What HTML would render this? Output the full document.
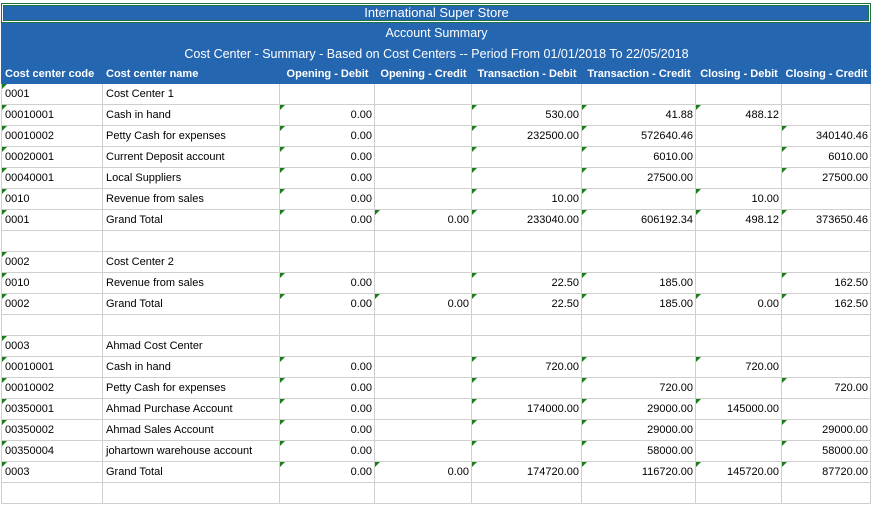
<!DOCTYPE html>
<html><head><meta charset="utf-8"><style>
body{margin:0;width:875px;height:505px;overflow:hidden;background:#fff;font-family:"Liberation Sans",sans-serif;}
.wrap{position:absolute;left:1px;top:3px;}
table{border-collapse:collapse;table-layout:fixed;}
td{border:1px solid #cfcfcf;height:20px;padding:0 2px 0 3px;font-size:11px;line-height:20px;white-space:nowrap;overflow:hidden;color:#000;position:relative;vertical-align:bottom;}
td.r{text-align:right;}
td.m::before{content:"";position:absolute;left:0;top:0;border-top:5px solid #1a7d1a;border-right:5px solid transparent;}
tr.b td{background:#2566b1;color:#fff;border-color:#2566b1;}
tr.t td{font-size:13px;text-align:center;height:18px;line-height:18px;}
tr.h td{font-weight:bold;font-size:11px;height:18px;line-height:18px;text-align:center;}
tr.h td.l{text-align:left;}
tr.s td{font-size:12.5px;text-align:center;}
</style></head><body>
<div class="wrap"><table>
<colgroup><col style="width:101px"><col style="width:177px"><col style="width:95px"><col style="width:97px"><col style="width:110px"><col style="width:114px"><col style="width:86px"><col style="width:89px"></colgroup>
<tr class="b t"><td colspan="8" style="box-shadow:inset 0 0 0 1px #fff,inset 0 0 0 2px #217346;border:1px solid #217346">International Super Store</td></tr>
<tr class="b s"><td colspan="8">Account Summary</td></tr>
<tr class="b s"><td colspan="8">Cost Center - Summary - Based on Cost Centers -- Period From 01/01/2018 To 22/05/2018</td></tr>
<tr class="b h"><td class="l">Cost center code</td><td class="l">Cost center name</td><td>Opening - Debit</td><td>Opening - Credit</td><td>Transaction - Debit</td><td>Transaction - Credit</td><td>Closing - Debit</td><td>Closing - Credit</td></tr>
<tr><td class="m">0001</td><td>Cost Center 1</td><td></td><td></td><td></td><td></td><td></td><td></td></tr>
<tr><td class="m">00010001</td><td>Cash in hand</td><td class="r m">0.00</td><td></td><td class="r m">530.00</td><td class="r m">41.88</td><td class="r m">488.12</td><td></td></tr>
<tr><td class="m">00010002</td><td>Petty Cash for expenses</td><td class="r m">0.00</td><td></td><td class="r m">232500.00</td><td class="r m">572640.46</td><td></td><td class="r m">340140.46</td></tr>
<tr><td class="m">00020001</td><td>Current Deposit account</td><td class="r m">0.00</td><td></td><td class="m"></td><td class="r m">6010.00</td><td></td><td class="r m">6010.00</td></tr>
<tr><td class="m">00040001</td><td>Local Suppliers</td><td class="r m">0.00</td><td></td><td class="m"></td><td class="r m">27500.00</td><td></td><td class="r m">27500.00</td></tr>
<tr><td class="m">0010</td><td>Revenue from sales</td><td class="r m">0.00</td><td></td><td class="r m">10.00</td><td class="m"></td><td class="r m">10.00</td><td></td></tr>
<tr><td class="m">0001</td><td>Grand Total</td><td class="r m">0.00</td><td class="r m">0.00</td><td class="r m">233040.00</td><td class="r m">606192.34</td><td class="r m">498.12</td><td class="r m">373650.46</td></tr>
<tr><td></td><td></td><td></td><td></td><td></td><td></td><td></td><td></td></tr>
<tr><td class="m">0002</td><td>Cost Center 2</td><td></td><td></td><td></td><td></td><td></td><td></td></tr>
<tr><td class="m">0010</td><td>Revenue from sales</td><td class="r m">0.00</td><td></td><td class="r m">22.50</td><td class="r m">185.00</td><td></td><td class="r m">162.50</td></tr>
<tr><td class="m">0002</td><td>Grand Total</td><td class="r m">0.00</td><td class="r m">0.00</td><td class="r m">22.50</td><td class="r m">185.00</td><td class="r m">0.00</td><td class="r m">162.50</td></tr>
<tr><td></td><td></td><td></td><td></td><td></td><td></td><td></td><td></td></tr>
<tr><td class="m">0003</td><td>Ahmad Cost Center</td><td></td><td></td><td></td><td></td><td></td><td></td></tr>
<tr><td class="m">00010001</td><td>Cash in hand</td><td class="r m">0.00</td><td></td><td class="r m">720.00</td><td class="m"></td><td class="r m">720.00</td><td></td></tr>
<tr><td class="m">00010002</td><td>Petty Cash for expenses</td><td class="r m">0.00</td><td></td><td class="m"></td><td class="r m">720.00</td><td></td><td class="r m">720.00</td></tr>
<tr><td class="m">00350001</td><td>Ahmad Purchase Account</td><td class="r m">0.00</td><td></td><td class="r m">174000.00</td><td class="r m">29000.00</td><td class="r m">145000.00</td><td></td></tr>
<tr><td class="m">00350002</td><td>Ahmad Sales Account</td><td class="r m">0.00</td><td></td><td class="m"></td><td class="r m">29000.00</td><td></td><td class="r m">29000.00</td></tr>
<tr><td class="m">00350004</td><td>johartown warehouse account</td><td class="r m">0.00</td><td></td><td class="m"></td><td class="r m">58000.00</td><td></td><td class="r m">58000.00</td></tr>
<tr><td class="m">0003</td><td>Grand Total</td><td class="r m">0.00</td><td class="r m">0.00</td><td class="r m">174720.00</td><td class="r m">116720.00</td><td class="r m">145720.00</td><td class="r m">87720.00</td></tr>
<tr><td></td><td></td><td></td><td></td><td></td><td></td><td></td><td></td></tr>
</table></div>
</body></html>
